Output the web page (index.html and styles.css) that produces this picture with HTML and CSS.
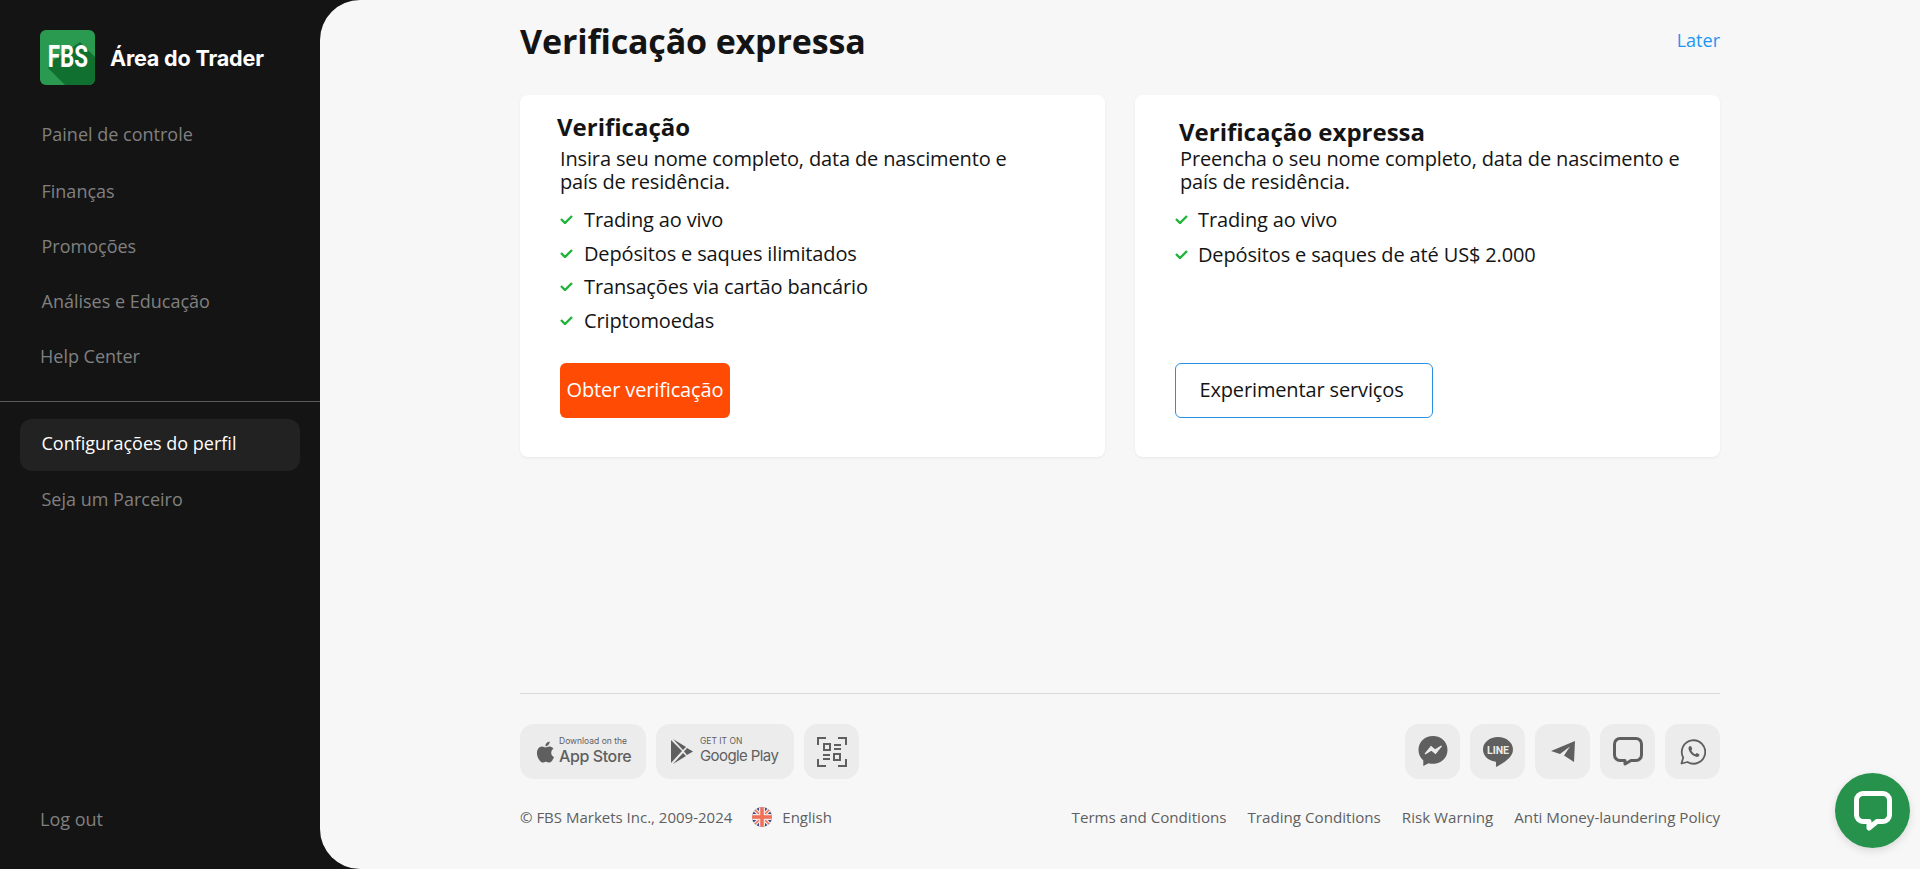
FILE: index.html
```html
<!DOCTYPE html>
<html lang="pt">
<head>
    <meta charset="UTF-8">
    <meta name="viewport" content="width=device-width, initial-scale=1.0">
    <title>Verificação expressa</title>
    <link rel="stylesheet" href="styles.css">
</head>
<body>
    <aside class="sidebar">
        <div class="brand">
            <div class="brand-logo">
                <svg width="55" height="55" viewBox="0 0 55 55">
                    <rect width="55" height="55" rx="6" fill="#2a9a50"/>
                    <path d="M8 38 L14 30 L40 12 L55 27 V49 A6 6 0 0 1 49 55 H25 Z" fill="#0f7030"/>
                </svg>
                <span class="brand-mark">FBS</span>
            </div>
            <span class="brand-name">Área do Trader</span>
        </div>

        <nav class="nav">
            <a class="nav-item first">Painel de controle</a>
            <a class="nav-item">Finanças</a>
            <a class="nav-item">Promoções</a>
            <a class="nav-item">Análises e Educação</a>
            <a class="nav-item help">Help Center</a>
        </nav>

        <div class="nav-divider"></div>

        <nav class="nav">
            <a class="nav-item active">Configurações do perfil</a>
            <a class="nav-item partner">Seja um Parceiro</a>
        </nav>

        <a class="logout">Log out</a>
    </aside>

    <main class="main">
        <div class="container">
            <header class="page-header">
                <h1>Verificação expressa</h1>
                <a class="later">Later</a>
            </header>

            <section class="cards">
                <article class="card card-full">
                    <h2>Verificação</h2>
                    <p>Insira seu nome completo, data de nascimento e<br>país de residência.</p>
                    <ul class="features">
                        <li><svg class="check" viewBox="0 0 13 9"><path d="M1 4 L5 8 L12 1"/></svg>Trading ao vivo</li>
                        <li><svg class="check" viewBox="0 0 13 9"><path d="M1 4 L5 8 L12 1"/></svg>Depósitos e saques ilimitados</li>
                        <li><svg class="check" viewBox="0 0 13 9"><path d="M1 4 L5 8 L12 1"/></svg>Transações via cartão bancário</li>
                        <li><svg class="check" viewBox="0 0 13 9"><path d="M1 4 L5 8 L12 1"/></svg>Criptomoedas</li>
                    </ul>
                    <a class="btn btn-primary">Obter verificação</a>
                </article>

                <article class="card card-express">
                    <h2>Verificação expressa</h2>
                    <p>Preencha o seu nome completo, data de nascimento e<br>país de residência.</p>
                    <ul class="features">
                        <li><svg class="check" viewBox="0 0 13 9"><path d="M1 4 L5 8 L12 1"/></svg>Trading ao vivo</li>
                        <li><svg class="check" viewBox="0 0 13 9"><path d="M1 4 L5 8 L12 1"/></svg>Depósitos e saques de até US$ 2.000</li>
                    </ul>
                    <a class="btn btn-outline">Experimentar serviços</a>
                </article>
            </section>

            <footer class="footer">
                <div class="footer-row">
                    <div class="tiles">
                        <a class="tile store store-apple">
                            <svg class="store-icon" width="21" height="24" viewBox="2 1 20 22"><path d="M18.71 19.5c-.83 1.24-1.71 2.45-3.05 2.47-1.34.03-1.77-.79-3.29-.79-1.53 0-2 .77-3.27.82-1.31.05-2.3-1.32-3.14-2.53C4.25 17 2.94 12.45 4.7 9.39c.87-1.52 2.43-2.48 4.12-2.51 1.28-.02 2.5.87 3.29.87.78 0 2.26-1.07 3.81-.91.65.03 2.47.26 3.64 1.98-.09.06-2.17 1.28-2.15 3.81.03 3.02 2.65 4.03 2.68 4.04-.03.07-.42 1.44-1.38 2.83M13 3.5c.73-.83 1.94-1.46 2.94-1.5.13 1.17-.34 2.35-1.04 3.19-.69.85-1.83 1.51-2.95 1.42-.15-1.15.41-2.35 1.05-3.11z"/></svg>
                            <span class="store-text"><small>Download on the</small><b>App Store</b></span>
                        </a>
                        <a class="tile store store-google">
                            <svg class="store-icon" width="22" height="25" viewBox="0 0 22 25"><path d="M0 1 L11 12 L0 24 Z"/><path d="M2 0 L15 8 L12 11 Z"/><path d="M16 9 L22 12.5 L16 16 L13 12.5 Z"/><path d="M12 14 L15 17 L2 25 Z"/></svg>
                            <span class="store-text"><small>GET IT ON</small><b>Google Play</b></span>
                        </a>
                        <a class="tile">
                            <svg width="30" height="30" viewBox="0 0 30 30" fill="none" stroke="#5f5f5f" stroke-width="2"><path d="M1 8 V1 H9 M21 1 H29 V8 M1 22 V29 H9 M21 29 H29 V22"/><rect x="7" y="7" width="6" height="6"/><path d="M17 8 H24 M17 12 H24 M6 18 H13 M6 22 H13"/><rect x="17" y="17" width="6" height="6"/></svg>
                        </a>
                    </div>
                    <div class="tiles">
                        <a class="tile">
                            <svg width="30" height="31" viewBox="0 0 30 31"><path d="M15 0 C6.7 0 .5 6 .5 14 C.5 18.3 2.300 21.900 5.300 24.400 V30 L10.500 27.200 C11.900 27.600 13.400 27.800 15 27.800 C23.300 27.800 29.500 21.800 29.500 14 C29.500 6 23.300 0 15 0 Z" fill="#5f5f5f"/><path d="M7 18 L13 10.500 L17 14 L23.500 10 L17.500 17.500 L13.500 14 Z" fill="#ececec" stroke="#ececec" stroke-width="1.200"/></svg>
                        </a>
                        <a class="tile">
                            <svg width="30" height="30" viewBox="0 0 30 30"><path d="M15 0 C6.700 0 0 5.500 0 12.500 C0 18.600 5 23.500 12 24.600 C13.500 25 13 26.500 12.900 29 C12.900 30 14 29.800 15 29 C19 26.500 30 21 30 12.500 C30 5.500 23.300 0 15 0 Z" fill="#5f5f5f"/><text x="15" y="17" class="line-mark" text-anchor="middle">LINE</text></svg>
                        </a>
                        <a class="tile">
                            <svg width="24" height="21" viewBox="0 0 24 21"><path d="M0 10 L24 0 L23 21 L13 14.500 L19 5.500 L9 13 Z" fill="#5f5f5f"/></svg>
                        </a>
                        <a class="tile">
                            <svg width="30" height="29" viewBox="0 0 30 29" fill="none"><path d="M7 1.500 H23 A5.500 5.500 0 0 1 28.500 7 V18 A5.500 5.500 0 0 1 23 23.500 H18 L12 27 V23.500 H7 A5.500 5.500 0 0 1 1.500 18 V7 A5.500 5.500 0 0 1 7 1.500 Z" stroke="#5f5f5f" stroke-width="3" stroke-linejoin="round"/></svg>
                        </a>
                        <a class="tile">
                            <svg width="26" height="26" viewBox="0 0 26 26" fill="none"><path d="M1.500 24.500 L3.200 18.500 A11.700 11.700 0 1 1 7.500 23 Z" stroke="#5f5f5f" stroke-width="1.800" stroke-linejoin="round"/><path d="M9.800 7 C8.500 7.800 8 9.400 9 11.500 C10.300 14.300 12.500 16.500 15.300 17.600 C17.300 18.300 18.800 17.600 19.300 16.300 L19.300 15.300 L16.700 14 L15.500 15.300 C13.700 14.600 12 12.900 11.300 11.200 L12.300 10 L11.100 7.200 Z" fill="#5f5f5f"/></svg>
                        </a>
                    </div>
                </div>

                <div class="footer-row footer-bottom">
                    <div class="footer-left">
                        <span>© FBS Markets Inc., 2009-2024</span>
                        <a class="lang">
                            <svg class="flag" width="20" height="20" viewBox="0 0 20 20">
                                <clipPath id="flag-round"><circle cx="10" cy="10" r="10"/></clipPath>
                                <g clip-path="url(#flag-round)">
                                    <rect width="20" height="20" fill="#3b4a86"/>
                                    <path d="M0 0 L20 20 M20 0 L0 20" stroke="#f3e6e0" stroke-width="4"/>
                                    <path d="M0 0 L20 20 M20 0 L0 20" stroke="#f0705a" stroke-width="1.500"/>
                                    <path d="M10 0 V20 M0 10 H20" stroke="#f3e6e0" stroke-width="6"/>
                                    <path d="M10 0 V20 M0 10 H20" stroke="#f0705a" stroke-width="3.500"/>
                                </g>
                            </svg>
                            English
                        </a>
                    </div>
                    <div class="footer-links">
                        <a>Terms and Conditions</a>
                        <a>Trading Conditions</a>
                        <a>Risk Warning</a>
                        <a>Anti Money-laundering Policy</a>
                    </div>
                </div>
            </footer>
        </div>
    </main>

    <a class="chat-button">
        <svg width="38" height="40" viewBox="0 0 38 40" fill="none"><path d="M9 2.500 H29 A6.500 6.500 0 0 1 35.500 9 V24 A6.500 6.500 0 0 1 29 30.500 H23 L15 37 V30.500 H9 A6.500 6.500 0 0 1 2.500 24 V9 A6.500 6.500 0 0 1 9 2.500 Z" stroke="#fff" stroke-width="5" stroke-linejoin="round"/></svg>
    </a>
</body>
</html>
```

FILE: styles.css
```css
* {
    box-sizing: border-box;
}
html, body {
    height: 100%;
}
body {
    margin: 0;
    display: flex;
    height: 869px;
    overflow: hidden;
    background-color: #141414;
    font-family: 'Open Sans', sans-serif;
    color: #141414;
}

/* sidebar */
.sidebar {
    width: 320px;
    flex-shrink: 0;
    display: flex;
    flex-direction: column;
    padding-top: 30px;
}
.brand {
    display: flex;
    align-items: center;
    padding-left: 40px;
    height: 55px;
}
.brand-logo {
    position: relative;
    width: 55px;
    height: 55px;
}
.brand-logo svg {
    display: block;
}
.brand-mark {
    position: absolute;
    top: 9px;
    left: 0;
    width: 55px;
    text-align: center;
    font-family: 'Roboto', sans-serif;
    font-weight: 700;
    font-size: 31px;
    line-height: 36px;
    color: #fff;
    transform: scaleX(0.72);
}
.brand-name {
    margin-left: 15px;
    font-family: 'Inter', sans-serif;
    font-weight: 700;
    font-size: 21.6px;
    letter-spacing: -0.2px;
    color: #fff;
}
.nav {
    display: flex;
    flex-direction: column;
    margin: 0 20px;
}
.nav-item {
    display: flex;
    align-items: center;
    height: 55px;
    padding-left: 21.5px;
    font-size: 18px;
    color: #808080;
}
.nav-item.first {
    height: 58px;
    margin-top: 20px;
}
.nav-item.help {
    padding-left: 20px;
}
.nav-divider {
    height: 1px;
    margin-top: 18px;
    margin-bottom: 17px;
    background-color: #5a5a5a;
}
.nav-item.active {
    height: 52px;
    padding-bottom: 4px;
    border-radius: 12px;
    background-color: #222;
    color: #fff;
}
.logout {
    margin-top: auto;
    margin-bottom: 37px;
    padding-left: 40px;
    font-size: 18px;
    line-height: 26px;
    color: #808080;
}

/* main area */
.main {
    flex: 1;
    display: flex;
    justify-content: center;
    background-color: #f7f7f7;
    border-radius: 40px 0 0 40px;
}
.container {
    width: 1200px;
    display: flex;
    flex-direction: column;
}
.page-header {
    display: flex;
    justify-content: space-between;
    align-items: center;
    margin-top: 20px;
    height: 44px;
}
.page-header h1 {
    margin: 0 0 2px;
    font-size: 34px;
    font-weight: 700;
    line-height: 42px;
    letter-spacing: -0.15px;
}
.later {
    font-size: 18px;
    color: #2196f3;
    margin-bottom: 5px;
}
.cards {
    display: grid;
    grid-template-columns: 585px 585px;
    gap: 30px;
    margin-top: 31px;
}
.card {
    height: 362px;
    display: flex;
    flex-direction: column;
    padding-bottom: 39px;
    background-color: #fff;
    border-radius: 8px;
    box-shadow: 0 1px 3px rgba(0, 0, 0, 0.06);
}
.card h2 {
    margin: 0;
    font-size: 24px;
    font-weight: 700;
    line-height: 30px;
}
.card p {
    margin: 0;
    font-size: 20px;
    line-height: 23px;
    letter-spacing: -0.14px;
}
.features {
    list-style: none;
    margin: 0;
    padding: 0;
    font-size: 20px;
    letter-spacing: -0.14px;
}
.features li {
    display: flex;
    align-items: center;
}
.check {
    width: 13px;
    height: 9px;
    margin-right: 11px;
    flex-shrink: 0;
    fill: none;
    stroke: #22b33a;
    stroke-width: 2.4;
}
.card-full {
    padding-top: 17px;
    padding-left: 40px;
}
.card-full h2 {
    margin-left: -3px;
    margin-bottom: 5px;
}
.card-full .features {
    margin-top: 10px;
}
.card-full .features li {
    height: 33.5px;
}
.card-express {
    padding-top: 22px;
    padding-left: 40px;
}
.card-express h2 {
    margin-left: 4px;
}
.card-express p {
    margin-left: 5px;
}
.card-express .features {
    margin-top: 9px;
}
.card-express .features li {
    height: 35px;
}
.card-express .check {
    margin-right: 10px;
}
.btn {
    display: flex;
    align-items: center;
    justify-content: center;
    height: 55px;
    margin-top: auto;
    padding-bottom: 2px;
    border-radius: 6px;
    font-size: 20px;
    letter-spacing: -0.14px;
}
.btn-primary {
    width: 170px;
    background-color: #ff4b03;
    color: #fff;
}
.btn-outline {
    width: 258px;
    padding-right: 5px;
    border: 1px solid #2a8fe0;
    color: #141414;
}

/* footer */
.footer {
    margin-top: auto;
    padding-top: 30px;
    padding-bottom: 42px;
    border-top: 1px solid #d9d9d9;
}
.footer-row {
    display: flex;
    justify-content: space-between;
    align-items: center;
}
.tiles {
    display: flex;
    gap: 10px;
}
.tile {
    display: flex;
    align-items: center;
    justify-content: center;
    min-width: 55px;
    height: 55px;
    border-radius: 14px;
    background-color: #ececec;
}
.store {
    justify-content: flex-start;
    color: #5f5f5f;
}
.store-apple {
    width: 126px;
    padding-left: 15px;
}
.store-google {
    width: 138px;
    padding-left: 15px;
}
.store-icon {
    flex-shrink: 0;
    fill: #5f5f5f;
}
.store-text {
    display: flex;
    flex-direction: column;
    margin-left: 7px;
    font-family: 'Inter', sans-serif;
}
.store-apple .store-text {
    margin-left: 3px;
}
.store-text small {
    font-size: 8.5px;
    line-height: 9px;
}
.store-text b {
    font-size: 16px;
    font-weight: 500;
    line-height: 20px;
    letter-spacing: -0.4px;
    white-space: nowrap;
}
.store-google .store-text b {
    font-size: 15px;
    font-weight: 400;
    letter-spacing: -0.6px;
}
.line-mark {
    font-family: 'Roboto', sans-serif;
    font-size: 10.5px;
    font-weight: 700;
    fill: #ececec;
}
.footer-bottom {
    margin-top: 28px;
    height: 20px;
    font-size: 15px;
    color: #5f5f5f;
}
.footer-left {
    display: flex;
    align-items: center;
}
.lang {
    display: flex;
    align-items: center;
    margin-left: 20px;
}
.flag {
    margin-right: 10px;
}
.footer-links {
    display: flex;
    gap: 21px;
    font-size: 15.15px;
}
.chat-button {
    position: fixed;
    left: 1835px;
    top: 773px;
    width: 75px;
    height: 75px;
    display: flex;
    align-items: center;
    justify-content: center;
    border-radius: 50%;
    background-color: #26924c;
    box-shadow: 0 3px 8px rgba(0, 0, 0, 0.12);
}
```
